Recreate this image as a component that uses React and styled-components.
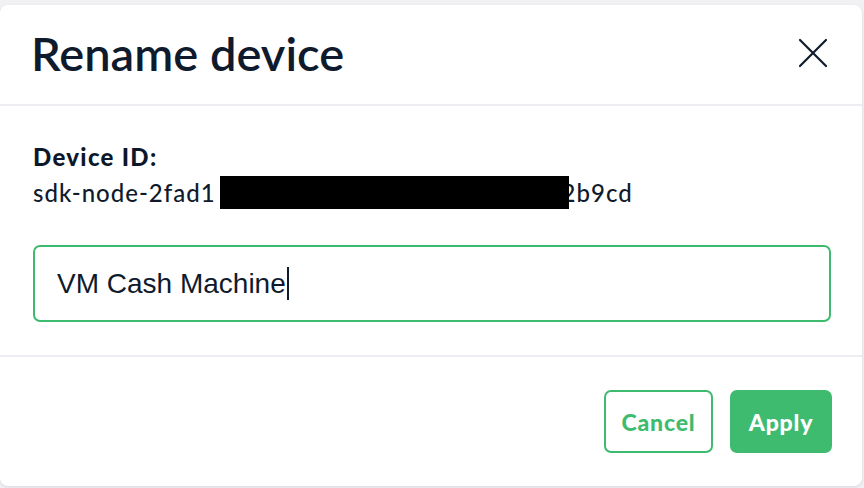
import React from "react";
import styled, { createGlobalStyle } from "styled-components";

const GlobalStyle = createGlobalStyle`
  html, body {
    margin: 0;
    padding: 0;
    background: #f1f1f3;
  }
  body {
    font-family: "Lato", "Noto Sans", sans-serif;
    color: #0f1b2d;
  }
`;

const Page = styled.div`
  width: 864px;
  height: 488px;
  padding-top: 5px;
  box-sizing: border-box;
  overflow: hidden;
`;

const Modal = styled.div`
  width: 862px;
  height: 481px;
  background: #ffffff;
  border-radius: 8px;
  box-shadow: 0 1px 3px rgba(20, 30, 50, 0.12);
  display: flex;
  flex-direction: column;
  overflow: hidden;
`;

const Header = styled.div`
  height: 101px;
  flex: none;
  box-sizing: border-box;
  padding: 0 34px 4px 31px;
  display: flex;
  align-items: center;
  justify-content: space-between;
  border-bottom: 2px solid #eeeef2;
`;

const Title = styled.h1`
  margin: 0;
  font-family: "Lato", sans-serif;
  font-weight: 600;
  font-size: 47px;
  letter-spacing: 0;
  color: #0f1b2d;
`;

const CloseButton = styled.button`
  border: 0;
  background: none;
  padding: 0;
  width: 30px;
  height: 30px;
  display: flex;
  align-items: center;
  justify-content: center;
  cursor: pointer;
  color: #0f1b2d;
`;

const Body = styled.div`
  flex: none;
  box-sizing: border-box;
  height: 251px;
  padding: 37px 31px 0 33px;
  border-bottom: 2px solid #eeeef2;
`;

const Label = styled.div`
  font-weight: 900;
  font-size: 24px;
  letter-spacing: 1.3px;
  line-height: 27px;
  color: #0c1829;
`;

const IdLine = styled.div`
  display: flex;
  align-items: center;
  height: 34px;
  margin-top: 5px;
  font-size: 24px;
  letter-spacing: 1px;
  font-weight: 500;
`;

const Redacted = styled.span`
  display: inline-block;
  width: 349px;
  height: 33px;
  background: #000;
  margin-left: 4px;
  margin-right: -7px;
  position: relative;
  z-index: 1;
`;

const Field = styled.div`
  margin-top: 36px;
  height: 77px;
  box-sizing: border-box;
  border: 2px solid #3fbb6f;
  border-radius: 7px;
  padding: 0 22px;
  display: flex;
  align-items: center;
  font-family: "Liberation Sans", Arial, sans-serif;
  font-size: 28px;
  color: #0f1b2d;
`;

const Caret = styled.span`
  display: inline-block;
  width: 2px;
  height: 33px;
  background: #0f1b2d;
  margin-left: 1px;
`;

const Footer = styled.div`
  flex: 1;
  display: flex;
  justify-content: flex-end;
  align-items: flex-start;
  gap: 17px;
  padding: 33px 30px 0 0;
`;

const Button = styled.button`
  height: 63px;
  box-sizing: border-box;
  padding: 0;
  border-radius: 7px;
  border: 2px solid #3fbb6f;
  background: ${(p) => (p.$primary ? "#3fbb6f" : "#ffffff")};
  color: ${(p) => (p.$primary ? "#ffffff" : "#3fbb6f")};
  font-family: "Lato", sans-serif;
  font-weight: 900;
  font-size: 23px;
  letter-spacing: 0.8px;
  cursor: pointer;
  width: ${(p) => p.$w}px;
`;

export default function App() {
  return (
    <>
      <GlobalStyle />
      <Page>
        <Modal>
          <Header>
            <Title>Rename device</Title>
            <CloseButton aria-label="Close">
              <svg width="30" height="30" viewBox="0 0 30 30">
                <path
                  d="M2 2 L28 28 M28 2 L2 28"
                  stroke="currentColor"
                  strokeWidth="2.2"
                  strokeLinecap="round"
                />
              </svg>
            </CloseButton>
          </Header>
          <Body>
            <Label>Device ID:</Label>
            <IdLine>
              sdk-node-2fad1
              <Redacted />
              2b9cd
            </IdLine>
            <Field>
              VM Cash Machine
              <Caret />
            </Field>
          </Body>
          <Footer>
            <Button $w={109}>Cancel</Button>
            <Button $primary $w={102}>
              Apply
            </Button>
          </Footer>
        </Modal>
      </Page>
    </>
  );
}
